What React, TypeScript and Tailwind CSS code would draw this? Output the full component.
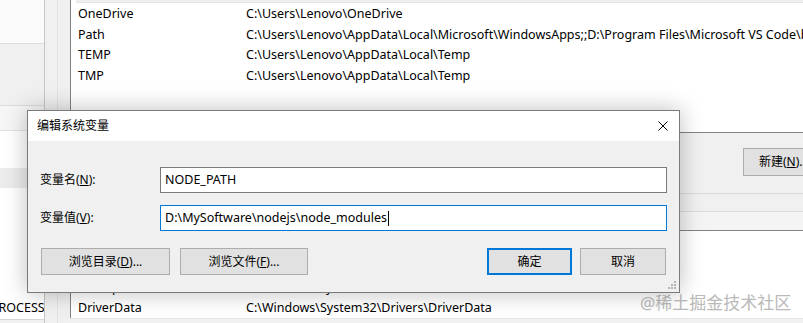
import React from "react";

const userVars = [
  { name: "OneDrive", value: "C:\\Users\\Lenovo\\OneDrive" },
  {
    name: "Path",
    value:
      "C:\\Users\\Lenovo\\AppData\\Local\\Microsoft\\WindowsApps;;D:\\Program Files\\Microsoft VS Code\\bin",
  },
  { name: "TEMP", value: "C:\\Users\\Lenovo\\AppData\\Local\\Temp" },
  { name: "TMP", value: "C:\\Users\\Lenovo\\AppData\\Local\\Temp" },
];

const sysVars = [
  { name: "ComSpec", value: "C:\\Windows\\system32\\cmd.exe" },
  { name: "DriverData", value: "C:\\Windows\\System32\\Drivers\\DriverData" },
];

function VarRow({ name, value, h }: { name: string; value: string; h: string }) {
  return (
    <div className={`flex items-center whitespace-nowrap pl-[7px] text-[12.5px] ${h}`}>
      <span className="w-[168px] shrink-0">{name}</span>
      <span>{value}</span>
    </div>
  );
}

function WinButton({
  children,
  className = "",
}: {
  children: React.ReactNode;
  className?: string;
}) {
  return (
    <button
      className={`shrink-0 h-full flex items-center justify-center bg-[#e1e1e1] border border-[#adadad] whitespace-nowrap ${className}`}
    >
      {children}
    </button>
  );
}

export default function App() {
  return (
    <div className="relative w-[803px] h-[323px] overflow-hidden bg-[#f0f0f0] flex text-[12px] text-black font-['Noto_Sans','Noto_Sans_CJK_SC',sans-serif]">
      {/* window behind, left edge */}
      <div className="w-[45px] shrink-0 flex flex-col bg-white border-r border-[#c6c6c6] overflow-hidden">
        <div className="h-[44px] bg-[#fbfbfb] border-b border-[#dcdcdc]" />
        <div className="h-[62px] bg-[#f0f0f0] border-b border-[#dcdcdc]" />
        <div className="h-[25px] bg-[#f6f6f6] border-b border-[#e2e2e2]" />
        <div className="h-[37px] bg-white" />
        <div className="h-[20px] bg-[#ececec]" />
        <div className="flex-1 bg-white" />
        <div className="h-[22px] bg-white overflow-hidden whitespace-nowrap flex items-center text-[12.5px]">
          <span className="ml-[-9px] shrink-0">PROCESSO</span>
        </div>
        <div className="h-[4px] bg-[#f0f0f0] border-t border-[#d6d6d6]" />
      </div>
      <div className="w-[13px] shrink-0 bg-[#f0f0f0] border-r border-[#e2e2e2]" />
      <div className="w-[12px] shrink-0 bg-[#f0f0f0]" />

      {/* environment variables window */}
      <div className="flex-1 min-w-0 flex flex-col">
        <div className="h-[133px] shrink-0 bg-white border-l border-b border-[#828282] flex flex-col overflow-hidden">
          <div className="h-[3px] bg-[#eeeeee] border-b border-[#e5e5e5] ml-[5px]" />
          <div className="h-px" />
          {userVars.map((v) => (
            <VarRow key={v.name} name={v.name} value={v.value} h="h-[20.6px]" />
          ))}
        </div>
        <div className="h-[60px] shrink-0 flex justify-end pt-[15px] overflow-hidden">
          <WinButton className="w-[86px] !h-[28px] mr-[-26px] !justify-start pl-[15px]">
            <span>
              新建(<span className="underline">N</span>)...
            </span>
          </WinButton>
        </div>
        <div className="h-[18px] shrink-0 border-t border-[#dadada] bg-[#f0f0f0]" />
        <div className="h-[19px] shrink-0 border-t border-[#dcdcdc] bg-[#f4f4f4]" />
        <div className="flex-1 flex flex-col justify-end bg-white border-t border-l border-[#828282] overflow-hidden">
          {sysVars.map((v) => (
            <VarRow key={v.name} name={v.name} value={v.value} h="h-[20px]" />
          ))}
        </div>
        <div className="h-[5px] shrink-0 bg-[#f0f0f0] border-t border-[#e6e6e6]" />
      </div>

      {/* watermark */}
      <div className="absolute left-[640px] top-[293px] text-[17px] leading-[20px] text-[#b9b9b9] [text-shadow:0_0_2px_#ffffff] whitespace-nowrap">
        @稀土掘金技术社区
      </div>

      {/* edit dialog */}
      <div className="absolute left-[27px] top-[110px] w-[653px] h-[183px] border border-[#7a7a7a] bg-[#f0f0f0] flex flex-col shadow-[0_0_22px_rgba(0,0,0,0.26)]">
        <div className="h-[30px] shrink-0 bg-white flex items-center justify-between pl-[9px] pr-[11px]">
          <span>编辑系统变量</span>
          <svg width="10" height="10" viewBox="0 0 10 10">
            <path d="M0.5 0.5 L9.5 9.5 M9.5 0.5 L0.5 9.5" stroke="#000" strokeWidth="1" />
          </svg>
        </div>
        <div className="flex-1 flex flex-col px-[12px] pt-[26px] relative">
          <div className="h-[26px] flex items-center">
            <span className="w-[120px] shrink-0">
              变量名(<span className="underline">N</span>):
            </span>
            <div className="flex-1 h-full bg-white border border-[#7a7a7a] flex items-center pl-[4px] text-[12.5px]">
              NODE_PATH
            </div>
          </div>
          <div className="h-[26px] mt-[12px] flex items-center">
            <span className="w-[120px] shrink-0">
              变量值(<span className="underline">V</span>):
            </span>
            <div className="flex-1 h-full bg-white border border-[#0078d7] flex items-center pl-[4px] text-[12.5px]">
              <span>D:\MySoftware\nodejs\node_modules</span>
              <span className="w-px h-[15px] bg-black ml-px" />
            </div>
          </div>
          <div className="h-[27px] mt-[17px] flex">
            <WinButton className="w-[129px] ml-px">
              <span>
                浏览目录(<span className="underline">D</span>)...
              </span>
            </WinButton>
            <WinButton className="w-[128px] ml-[10px]">
              <span>
                浏览文件(<span className="underline">F</span>)...
              </span>
            </WinButton>
            <div className="flex-1" />
            <WinButton className="w-[85px] !border-2 !border-[#0078d7]">确定</WinButton>
            <WinButton className="w-[86px] ml-[8px] mr-px">取消</WinButton>
          </div>
          <svg
            className="absolute right-[3px] bottom-[3px]"
            width="8"
            height="8"
            viewBox="0 0 8 8"
            fill="#b5b5b5"
          >
            <rect x="6" y="0" width="2" height="2" />
            <rect x="3" y="3" width="2" height="2" />
            <rect x="6" y="3" width="2" height="2" />
            <rect x="0" y="6" width="2" height="2" />
            <rect x="3" y="6" width="2" height="2" />
            <rect x="6" y="6" width="2" height="2" />
          </svg>
        </div>
      </div>
    </div>
  );
}
